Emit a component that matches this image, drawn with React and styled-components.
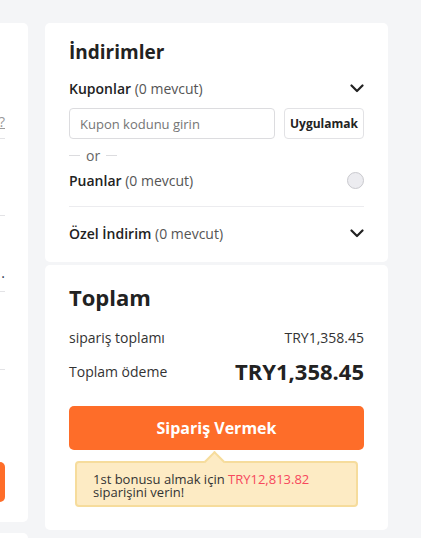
import React from 'react'
import styled, { createGlobalStyle } from 'styled-components'

const GlobalStyle = createGlobalStyle`
  html, body {
    margin: 0;
    padding: 0;
    background: #f4f5f7;
    overflow: hidden;
  }
  body {
    font-family: "Open Sans", "Noto Sans", sans-serif;
    color: #222;
  }
`

const Page = styled.div`
  width: 421px;
  height: 538px;
  box-sizing: border-box;
  padding: 23px 33px 0 0;
  display: flex;
  justify-content: flex-end;
  align-items: flex-start;
  gap: 17px;
  overflow: hidden;
`

const Column = styled.div`
  flex: 0 0 ${props => props.width}px;
  width: ${props => props.width}px;
  display: flex;
  flex-direction: column;
  gap: ${props => props.gap}px;
`

const Card = styled.div`
  background: #fff;
  border-radius: 5px;
  box-sizing: border-box;
  padding: ${props => props.pad};
  height: ${props => props.h ? props.h + 'px' : 'auto'};
`

const LeftBlock = styled.div`
  height: ${props => props.h}px;
  display: flex;
  flex-direction: column;
  justify-content: ${props => props.align || 'flex-end'};
  border-bottom: ${props => props.line ? '1px solid #e3e3e6' : 'none'};
  font-size: 14px;
`

const LeftRow = styled.div`
  display: flex;
  justify-content: space-between;
  align-items: center;
  height: 20px;
  margin-bottom: ${props => props.mb || 0}px;
`

const HelpLink = styled.span`
  color: #999;
  text-decoration: underline;
`

const DotText = styled.span`
  color: #2b3550;
`

const LeftButton = styled.div`
  height: 40px;
  border-radius: 5px;
  background: #fe6d29;
  color: #fff;
  font-weight: 700;
  display: flex;
  align-items: center;
  justify-content: center;
  margin-bottom: 23px;
`

const Title = styled.h2`
  margin: 0;
  font-size: ${props => props.size}px;
  line-height: ${props => props.lh}px;
  font-weight: 700;
  color: #222;
`

const Row = styled.div`
  display: flex;
  align-items: center;
  justify-content: space-between;
  height: ${props => props.h}px;
  margin-top: ${props => props.mt || 0}px;
  font-size: 14px;
`

const Label = styled.span`
  font-weight: 600;
  color: #222;
`

const Muted = styled.span`
  font-weight: 400;
  color: #555;
`

const Chevron = () => (
  <svg width="14" height="9" viewBox="0 0 14 9" fill="none">
    <polyline points="1.5,1.5 7,7 12.5,1.5" stroke="#222" strokeWidth="2.2" strokeLinecap="round" strokeLinejoin="round" />
  </svg>
)

const CouponForm = styled.div`
  display: flex;
  gap: 9px;
  margin-top: 8px;
  height: 31px;
`

const CouponInput = styled.input`
  flex: 1;
  min-width: 0;
  box-sizing: border-box;
  height: 31px;
  border: 1px solid #dcdcdf;
  border-radius: 4px;
  padding: 0 10px;
  font-family: inherit;
  font-size: 13px;
  color: #222;
  outline: none;

  ::placeholder {
    color: #bdbdc2;
  }
`

const ApplyButton = styled.button`
  width: 80px;
  box-sizing: border-box;
  height: 31px;
  border: 1px solid #e2e2e5;
  border-radius: 4px;
  background: #fff;
  font-family: inherit;
  font-size: 12px;
  font-weight: 700;
  color: #222;
  padding: 0;
`

const OrDivider = styled.div`
  display: flex;
  align-items: center;
  gap: 6px;
  height: 16px;
  margin-top: 8px;
  font-size: 14px;
  color: #666;

  &::before, &::after {
    content: '';
    width: 11px;
    height: 1px;
    background: #dcdcdf;
  }
`

const Radio = styled.span`
  width: 17px;
  height: 17px;
  box-sizing: border-box;
  border-radius: 50%;
  border: 1px solid #c9c9ce;
  background: #ececf0;
`

const Divider = styled.div`
  height: 1px;
  background: #ececef;
  margin: 14px 0 14px;
`

const Amount = styled.span`
  font-size: ${props => props.big ? 22 : 14}px;
  font-weight: ${props => props.big ? 700 : 400};
  color: ${props => props.big ? '#222' : '#333'};
`

const Text = styled.span`
  color: #333;
`

const OrderButton = styled.button`
  display: block;
  width: 100%;
  height: 44px;
  margin-top: 20px;
  border: none;
  border-radius: 5px;
  background: #fe6d29;
  color: #fff;
  font-family: inherit;
  font-size: 16px;
  font-weight: 700;
`

const Bonus = styled.div`
  position: relative;
  margin: 11px 6px 0;
  box-sizing: border-box;
  height: 46px;
  padding: 10px 16px;
  background: #fdebc4;
  border: 2px solid #f6dc9c;
  border-radius: 4px;
  font-size: 13px;
  line-height: 13px;
  color: #333;

  &::before {
    content: '';
    position: absolute;
    top: -9px;
    left: 130px;
    width: 13px;
    height: 13px;
    background: #fdebc4;
    border-top: 2px solid #f6dc9c;
    border-left: 2px solid #f6dc9c;
    transform: rotate(45deg);
  }
`

const BonusText = styled.span`
  position: relative;
`

const Highlight = styled.span`
  color: #f7485d;
`

const App = () => {
  return (
    <>
      <GlobalStyle />
      <Page>
        <Column width={300} gap={11}>
          <Card pad="0 23px 0 24px" h={499}>
            <LeftBlock h={115} line>
              <LeftRow mb={7}>
                <Text>Sipariş özeti</Text>
                <HelpLink>Nasıl kullanılır?</HelpLink>
              </LeftRow>
            </LeftBlock>
            <LeftBlock h={76} line />
            <LeftBlock h={75} line>
              <LeftRow mb={9}>
                <Text>Teslimat</Text>
                <DotText>.</DotText>
              </LeftRow>
            </LeftBlock>
            <LeftBlock h={77} line />
            <LeftBlock h={155}>
              <LeftButton>Devam</LeftButton>
            </LeftBlock>
          </Card>
          <Card h={60} />
        </Column>

        <Column width={343} gap={3}>
          <Card pad="16px 24px 17px">
            <Title size={19} lh={26}>İndirimler</Title>
            <Row h={24} mt={11}>
              <span><Label>Kuponlar</Label> <Muted>(0 mevcut)</Muted></span>
              <Chevron />
            </Row>
            <CouponForm>
              <CouponInput placeholder="Kupon kodunu girin" />
              <ApplyButton>Uygulamak</ApplyButton>
            </CouponForm>
            <OrDivider>or</OrDivider>
            <Row h={24} mt={5}>
              <span><Label>Puanlar</Label> <Muted>(0 mevcut)</Muted></span>
              <Radio />
            </Row>
            <Divider />
            <Row h={24}>
              <span><Label>Özel İndirim</Label> <Muted>(0 mevcut)</Muted></span>
              <Chevron />
            </Row>
          </Card>

          <Card pad="17px 24px 23px">
            <Title size={22} lh={30}>Toplam</Title>
            <Row h={20} mt={15}>
              <Text>sipariş toplamı</Text>
              <Amount>TRY1,358.45</Amount>
            </Row>
            <Row h={30} mt={9}>
              <Text>Toplam ödeme</Text>
              <Amount big>TRY1,358.45</Amount>
            </Row>
            <OrderButton>Sipariş Vermek</OrderButton>
            <Bonus>
              <BonusText>
                1st bonusu almak için <Highlight>TRY12,813.82</Highlight> siparişini verin!
              </BonusText>
            </Bonus>
          </Card>
        </Column>
      </Page>
    </>
  )
}

export default App
